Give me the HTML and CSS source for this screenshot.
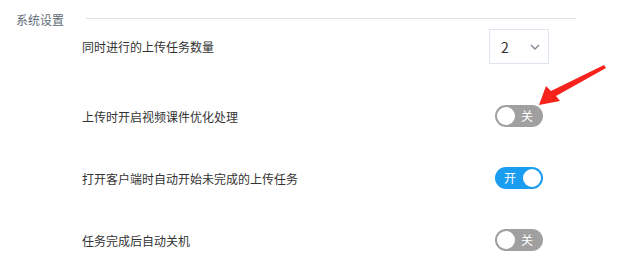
FILE: index.html
```html
<!DOCTYPE html>
<html lang="zh-CN">
<head>
  <meta charset="UTF-8">
  <title>系统设置</title>
  <link rel="stylesheet" href="styles.css">
</head>
<body>

  <div class="section">
    <div class="section-head">
      <span class="section-title">系统设置</span>
      <span class="section-line"></span>
    </div>

    <div class="row row-select">
      <span class="label">同时进行的上传任务数量</span>
      <div class="select">
        <span class="select-value">2</span>
        <svg class="chevron" width="10" height="6" viewBox="0 0 10 6">
          <path d="M1 1 L5 5 L9 1" fill="none" stroke="#7f8b96" stroke-width="1.4"/>
        </svg>
      </div>
    </div>

    <div class="row">
      <span class="label">上传时开启视频课件优化处理</span>
      <div class="switch off"><span class="knob"></span><span class="switch-text">关</span></div>
    </div>

    <div class="row">
      <span class="label">打开客户端时自动开始未完成的上传任务</span>
      <div class="switch on"><span class="switch-text">开</span><span class="knob"></span></div>
    </div>

    <div class="row">
      <span class="label">任务完成后自动关机</span>
      <div class="switch off"><span class="knob"></span><span class="switch-text">关</span></div>
    </div>
  </div>

  <!-- annotation arrow -->
  <svg class="arrow" width="627" height="277" viewBox="0 0 627 277">
    <polygon fill="#f5231c" points="604,65 606,68 556,96 560,101 539,105 546,86 551,91"/>
  </svg>

</body>
</html>
```

FILE: styles.css
```css
body {
  margin: 0;
  font-family: "Noto Sans CJK SC", "Noto Sans", sans-serif;
  background: #fff;
  color: #333;
}

.section {
  width: 627px;
}

.section-head {
  display: flex;
  padding-top: 11px;
  padding-left: 16px;
  height: 18px;
}

.section-title {
  font-size: 12px;
  line-height: 17px;
  color: #5e6b76;
}

.section-line {
  margin-top: 7px;
  margin-left: 22px;
  width: 490px;
  height: 1px;
  background-color: #dde3e6;
}

.row {
  display: flex;
  justify-content: space-between;
  align-items: center;
  width: 467px;
  height: 62px;
  margin-left: 82px;
}

.row-select {
  height: 35px;
  margin-bottom: 21px;
}

.label {
  font-size: 12px;
  color: #333;
}

.select {
  display: flex;
  align-items: center;
  justify-content: space-between;
  box-sizing: border-box;
  width: 60px;
  height: 35px;
  padding: 0 8px 0 11px;
  border: 1px solid #dfe5ee;
  font-size: 14px;
  color: #333;
}

.switch {
  display: flex;
  align-items: center;
  justify-content: space-between;
  box-sizing: border-box;
  width: 48px;
  height: 22px;
  padding: 0 2px;
  border-radius: 11px;
  margin-right: 6px;
}

.switch.off {
  background-color: #a0a0a0;
}

.switch.on {
  background-color: #1a9cf1;
}

.knob {
  width: 18px;
  height: 18px;
  border-radius: 50%;
  background-color: #fff;
}

.switch-text {
  font-size: 12px;
  line-height: 22px;
  color: #fff;
}

.switch.off .switch-text {
  margin-right: 8px;
}

.switch.on .switch-text {
  margin-left: 7px;
}

.arrow {
  position: absolute;
  left: 0;
  top: 0;
  pointer-events: none;
}
```
